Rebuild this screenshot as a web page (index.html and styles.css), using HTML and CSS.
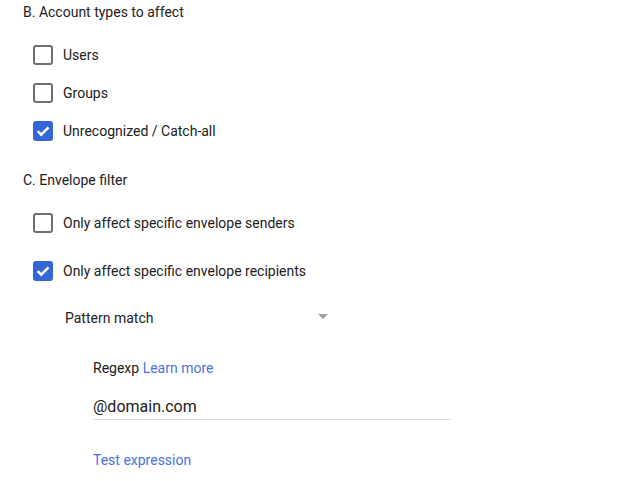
FILE: index.html
```html
<!DOCTYPE html>
<html>
<head>
<meta charset="utf-8">
<link rel="stylesheet" href="styles.css">
</head>
<body>
<div class="page">
  <div class="section-title first">B. Account types to affect</div>
  <div class="group group-b">
    <label class="row">
      <span class="cb"></span><span class="label">Users</span>
    </label>
    <label class="row">
      <span class="cb"></span><span class="label">Groups</span>
    </label>
    <label class="row">
      <span class="cb checked"><svg viewBox="0 0 20 20" width="20" height="20"><path d="M4.6 10.2 L8.2 13.7 L15.5 6.4" fill="none" stroke="#fff" stroke-width="2.5"/></svg></span><span class="label">Unrecognized / Catch-all</span>
    </label>
  </div>

  <div class="section-title second">C. Envelope filter</div>
  <div class="group group-c">
    <label class="row tall">
      <span class="cb"></span><span class="label">Only affect specific envelope senders</span>
    </label>
    <label class="row tall">
      <span class="cb checked"><svg viewBox="0 0 20 20" width="20" height="20"><path d="M4.6 10.2 L8.2 13.7 L15.5 6.4" fill="none" stroke="#fff" stroke-width="2.5"/></svg></span><span class="label">Only affect specific envelope recipients</span>
    </label>
  </div>

  <div class="nested">
    <div class="select">
      <span class="select-text">Pattern match</span>
      <span class="arrow"></span>
    </div>
    <div class="regexp">
      <div class="field-label">Regexp <a class="link" href="#">Learn more</a></div>
      <div class="input">@domain.com</div>
      <a class="link test" href="#">Test expression</a>
    </div>
  </div>
</div>
</body>
</html>
```

FILE: styles.css
```css
html, body {
  margin: 0;
  padding: 0;
  background: #fff;
}
body {
  font-family: Roboto, "Noto Sans", "Liberation Sans", sans-serif;
  font-size: 14px;
  color: #212121;
}
.page {
  padding: 2px 0 0 23px;
}
.section-title {
  font-size: 14px;
  line-height: 20px;
  color: #212121;
}
.section-title.second {
  margin-top: 20px;
}
.group-b {
  margin-top: 14px;
  display: flex;
  flex-direction: column;
}
.group-c {
  margin-top: 9px;
  display: flex;
  flex-direction: column;
}
.row {
  display: flex;
  align-items: center;
  height: 38px;
  padding-left: 10px;
}
.row.tall {
  height: 48px;
}
.cb {
  box-sizing: border-box;
  width: 20px;
  height: 20px;
  border: 2px solid #6f6f6f;
  border-radius: 3px;
  margin-right: 10px;
  display: flex;
  align-items: center;
  justify-content: center;
  flex: none;
}
.cb.checked {
  border: none;
  background: #3367d6;
}
.cb svg {
  display: block;
}
.label {
  line-height: 20px;
}
.nested {
  padding-left: 42px;
  margin-top: 13px;
}
.select {
  display: flex;
  align-items: center;
  width: 265px;
  height: 20px;
  position: relative;
}
.select-text {
  flex: 1;
  line-height: 20px;
}
.arrow {
  width: 0;
  height: 0;
  border-left: 5px solid transparent;
  border-right: 5px solid transparent;
  border-top: 5px solid #9e9e9e;
  margin-right: 2px;
  position: relative;
  top: -2px;
}
.regexp {
  padding-left: 28px;
  margin-top: 30px;
  display: flex;
  flex-direction: column;
  width: 358px;
}
.field-label {
  line-height: 20px;
}
.link {
  color: #4a72dc;
  text-decoration: none;
}
.input {
  margin-top: 18px;
  font-size: 16px;
  line-height: 22px;
  color: #212121;
  padding-bottom: 1px;
  border-bottom: 1px solid #dcdcdc;
}
.test {
  margin-top: 30px;
  line-height: 20px;
  align-self: flex-start;
}
```
